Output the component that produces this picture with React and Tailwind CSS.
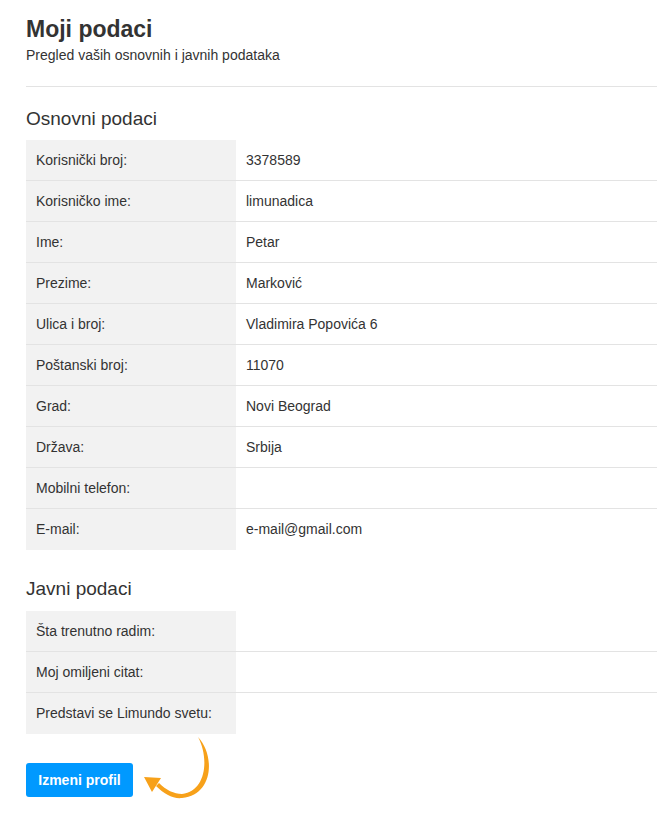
import React from "react";

const osnovni = [
  ["Korisnički broj:", "3378589"],
  ["Korisničko ime:", "limunadica"],
  ["Ime:", "Petar"],
  ["Prezime:", "Marković"],
  ["Ulica i broj:", "Vladimira Popovića 6"],
  ["Poštanski broj:", "11070"],
  ["Grad:", "Novi Beograd"],
  ["Država:", "Srbija"],
  ["Mobilni telefon:", ""],
  ["E-mail:", "e-mail@gmail.com"],
];

const javni = [
  ["Šta trenutno radim:", ""],
  ["Moj omiljeni citat:", ""],
  ["Predstavi se Limundo svetu:", ""],
];

function DataTable({ rows }) {
  return (
    <div className="flex flex-col">
      {rows.map(([label, value], i) => (
        <div
          key={label}
          className={
            "flex h-[41px] " +
            (i < rows.length - 1 ? "border-b border-[#e3e3e3]" : "")
          }
        >
          <div className="flex w-[210px] shrink-0 items-center bg-[#f2f2f2] pl-[10px]">
            {label}
          </div>
          <div className="flex items-center pl-[10px]">{value}</div>
        </div>
      ))}
    </div>
  );
}

// hand-drawn orange arrow pointing back at the button
function Arrow() {
  return (
    <svg
      width="72"
      height="66"
      viewBox="0 0 72 66"
      className="ml-[9px] mt-[-26px]"
    >
      <path
        d="M56 0 C73 18 72 58 40 61 C31 62 22 57 14 49 L17 46 C24 53 32 57 40 57 C65 54 67 20 56 0 Z"
        fill="#f7a11a"
      />
      <path d="M2 40 L19 41 L10 55 Z" fill="#f7a11a" />
    </svg>
  );
}

export default function App() {
  return (
    <div className="min-h-[814px] bg-white pl-[26px] pt-[15px] font-['Liberation_Sans',Arial,sans-serif] text-[14px] text-[#333]">
      <h1 className="text-[23px] font-bold leading-[28px]">Moji podaci</h1>
      <p className="mt-[3px] leading-[18px]">Pregled vaših osnovnih i javnih podataka</p>
      <div className="mt-[22px] border-t border-[#e3e3e3]" />

      <h2 className="mt-[21px] mb-[10px] text-[19px] leading-[22px]">Osnovni podaci</h2>
      <DataTable rows={osnovni} />

      <h2 className="mt-[28px] mb-[11px] text-[19px] leading-[22px]">Javni podaci</h2>
      <DataTable rows={javni} />

      <div className="mt-[29px] flex items-start">
        <button className="h-[34px] w-[107px] rounded-[3px] bg-[#0099ff] text-[14px] font-bold text-white">
          Izmeni profil
        </button>
        <Arrow />
      </div>
    </div>
  );
}
